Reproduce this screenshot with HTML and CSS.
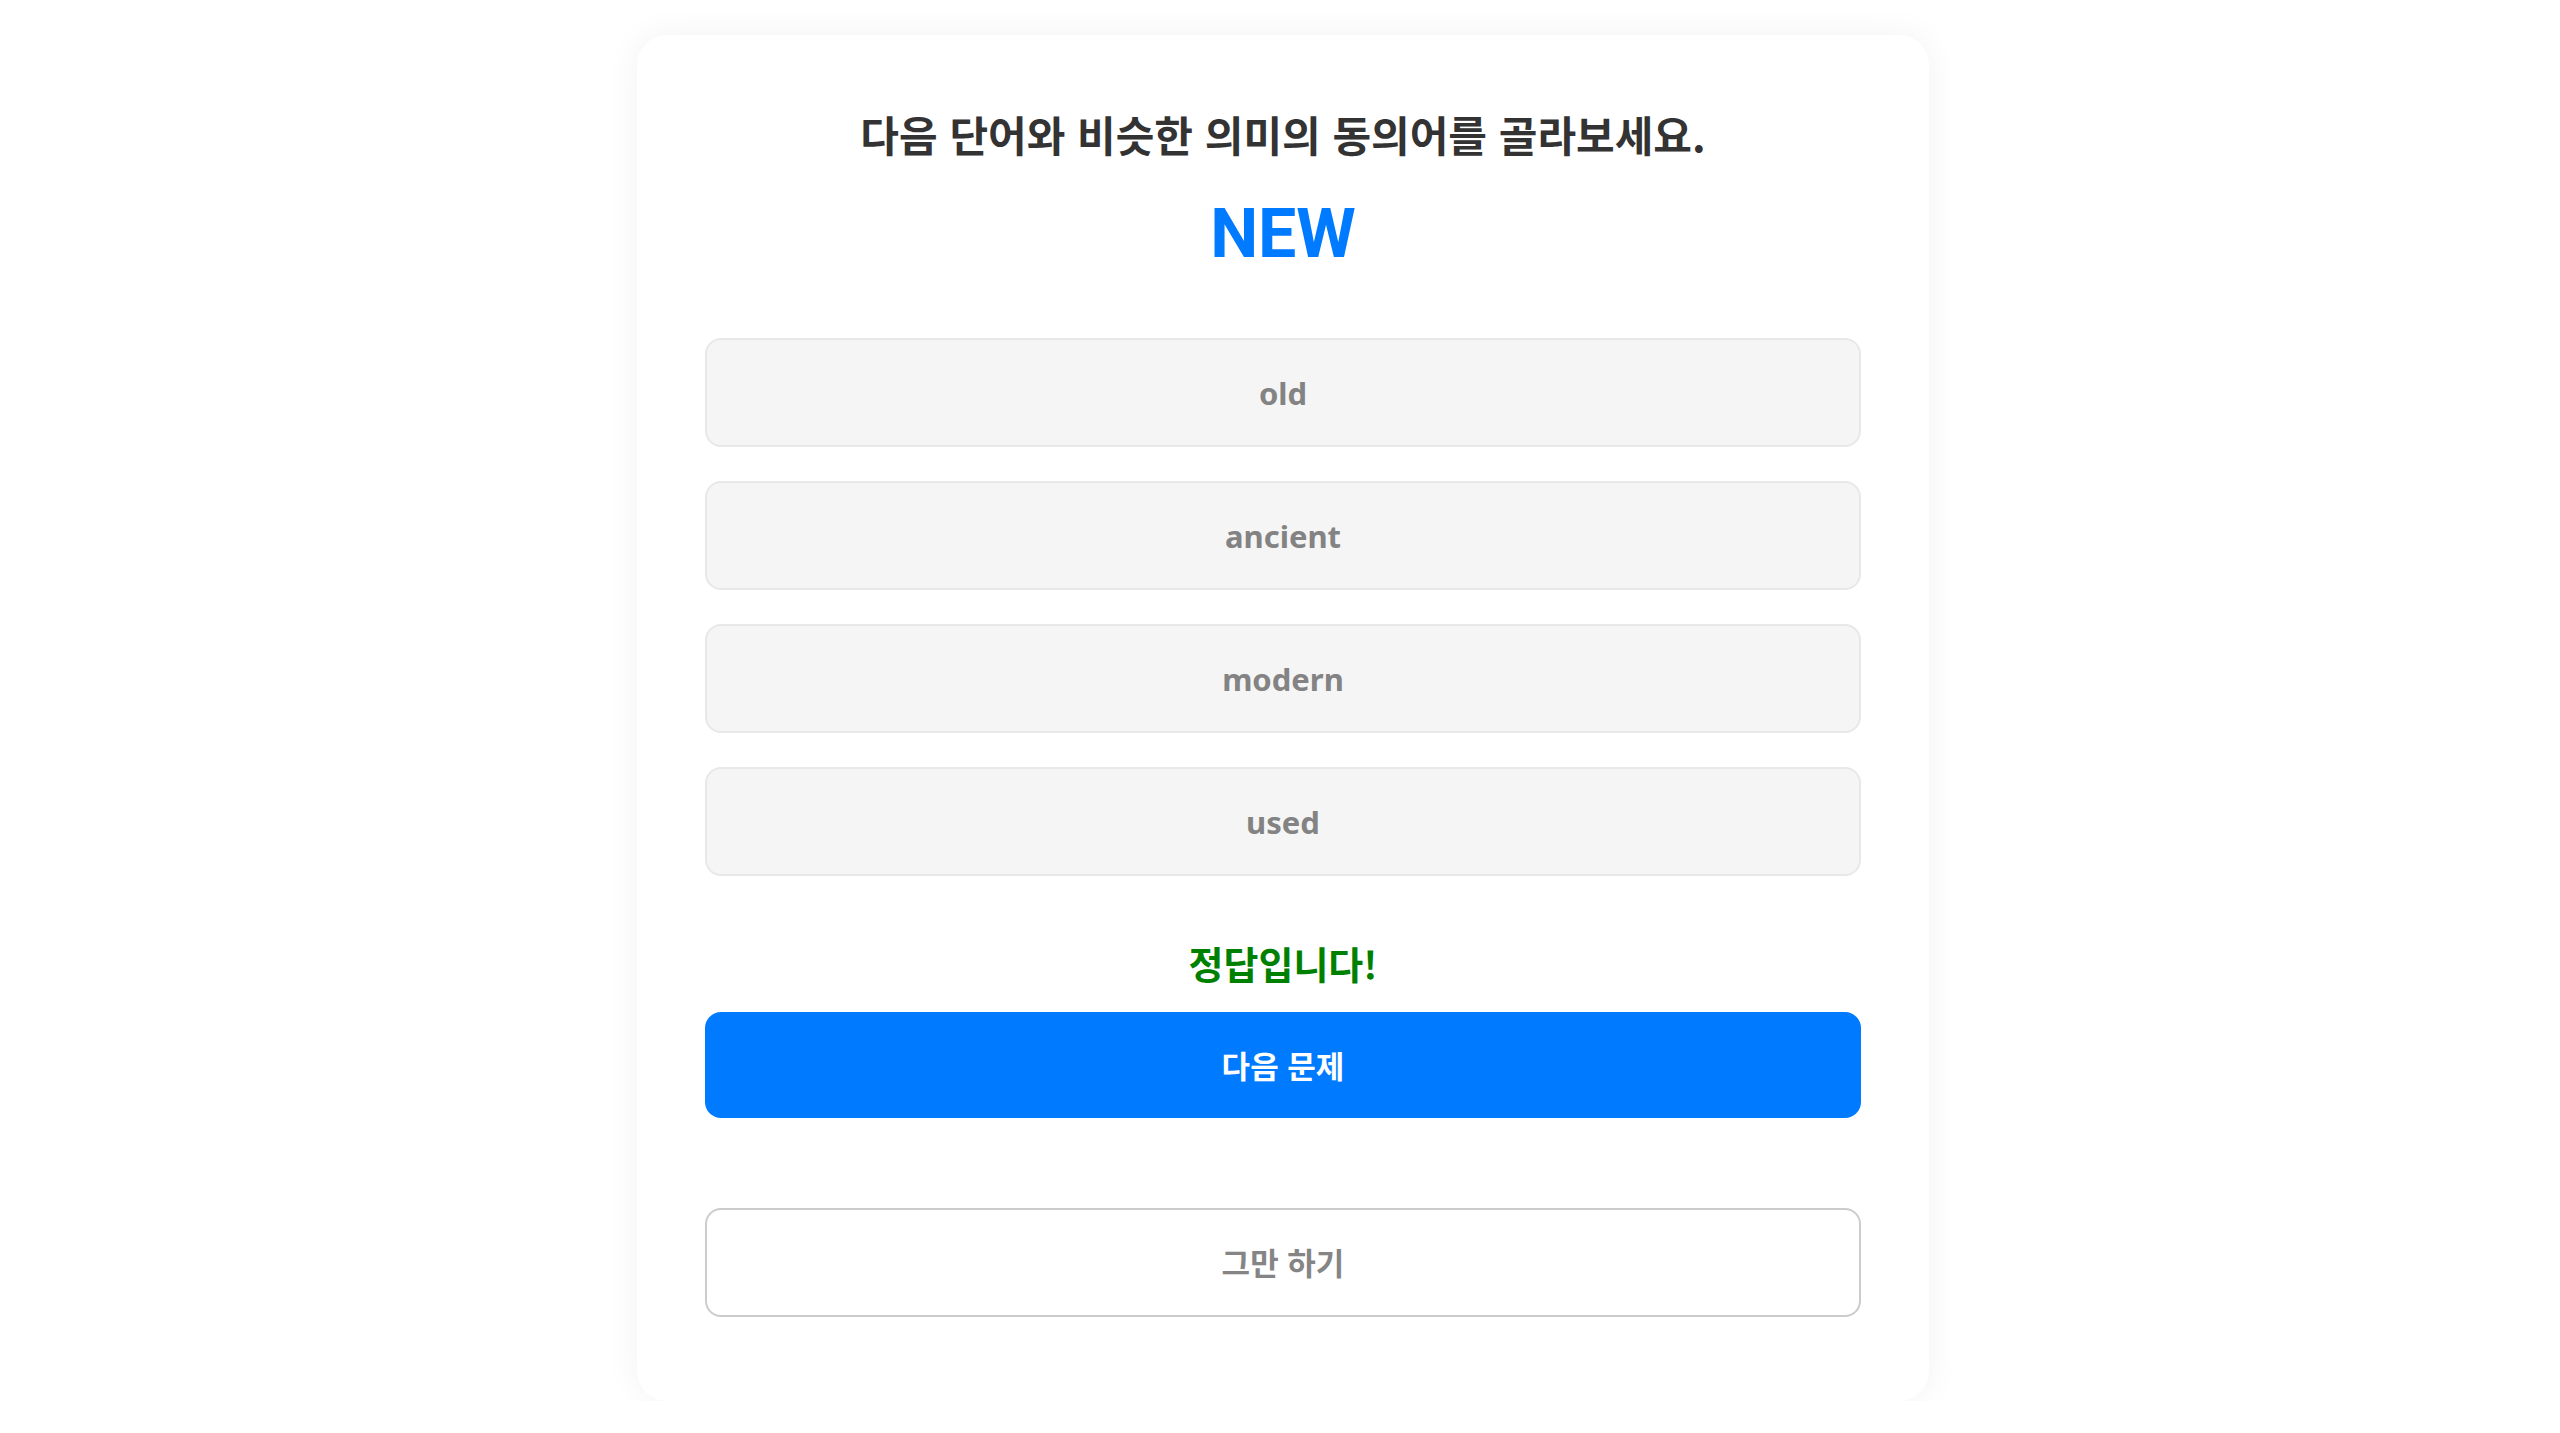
FILE: index.html
```html
<!DOCTYPE html>
<html lang="ko">
<head>
<meta charset="utf-8">
<title>동의어 퀴즈</title>
<link rel="stylesheet" href="styles.css">
</head>
<body>
<main class="card">
  <h1 class="question">다음 단어와 비슷한 의미의 동의어를 골라보세요.</h1>
  <div class="word">NEW</div>
  <div class="options">
    <button class="option">old</button>
    <button class="option">ancient</button>
    <button class="option">modern</button>
    <button class="option">used</button>
  </div>
  <p class="feedback">정답입니다!</p>
  <button class="next">다음 문제</button>
  <button class="quit">그만 하기</button>
</main>
</body>
</html>
```
FILE: styles.css
```css
html, body {
  margin: 0;
  padding: 0;
  background: #ffffff;
}
body {
  font-family: "Noto Sans", "Noto Sans CJK KR", sans-serif;
  padding: 35px 0 0 6px;
}
.card {
  box-sizing: border-box;
  width: 1292px;
  margin: 0 auto;
  padding: 71px 68px 84px;
  background: #ffffff;
  border-radius: 30px;
  box-shadow: 0 0 34px rgba(0, 0, 0, 0.055);
  display: flex;
  flex-direction: column;
  align-items: stretch;
}
.question {
  margin: 0;
  text-align: center;
  font-family: "Noto Sans CJK KR", "Noto Sans", sans-serif;
  font-size: 42px;
  line-height: 56px;
  font-weight: 700;
  color: #333333;
}
.word {
  margin-top: 32px;
  text-align: center;
  font-family: Roboto, "Noto Sans", sans-serif;
  font-size: 68px;
  line-height: 80px;
  font-weight: 700;
  color: #007bff;
}
.options {
  margin-top: 64px;
  display: flex;
  flex-direction: column;
  gap: 34px;
}
.option {
  box-sizing: border-box;
  height: 109px;
  width: 100%;
  background: #f5f5f5;
  border: 2px solid #e8e8e8;
  border-radius: 16px;
  font-family: "Noto Sans", "Noto Sans CJK KR", sans-serif;
  font-size: 31px;
  font-weight: 700;
  color: #838383;
  padding: 0;
}
.feedback {
  margin: 62px 0 0;
  text-align: center;
  font-family: "Noto Sans CJK KR", sans-serif;
  font-size: 38px;
  line-height: 50px;
  font-weight: 700;
  color: #008000;
}
.next {
  margin-top: 24px;
  box-sizing: border-box;
  height: 106px;
  width: 100%;
  border: none;
  border-radius: 16px;
  background: #007bff;
  color: #ffffff;
  font-family: "Noto Sans CJK KR", sans-serif;
  font-size: 31px;
  font-weight: 700;
  padding: 0 0 2px;
}
.quit {
  margin-top: 90px;
  box-sizing: border-box;
  height: 109px;
  width: 100%;
  border: 2px solid #cccccc;
  border-radius: 16px;
  background: #ffffff;
  color: #858585;
  font-family: "Noto Sans CJK KR", sans-serif;
  font-size: 31px;
  font-weight: 700;
  padding: 0 0 2px;
}
```
